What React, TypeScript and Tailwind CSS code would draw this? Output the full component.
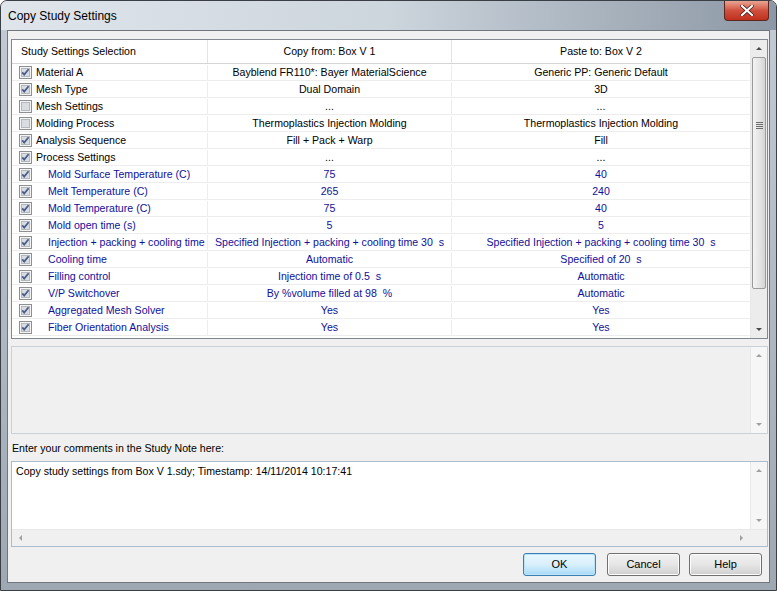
import React from "react";

type Row = {
  label: string;
  from: string;
  to: string;
  checked: boolean;
  child?: boolean;
};

const rows: Row[] = [
  { label: "Material A", from: "Bayblend FR110*: Bayer MaterialScience", to: "Generic PP: Generic Default", checked: true },
  { label: "Mesh Type", from: "Dual Domain", to: "3D", checked: true },
  { label: "Mesh Settings", from: "...", to: "...", checked: false },
  { label: "Molding Process", from: "Thermoplastics Injection Molding", to: "Thermoplastics Injection Molding", checked: false },
  { label: "Analysis Sequence", from: "Fill + Pack + Warp", to: "Fill", checked: true },
  { label: "Process Settings", from: "...", to: "...", checked: true },
  { label: "Mold Surface Temperature (C)", from: "75", to: "40", checked: true, child: true },
  { label: "Melt Temperature (C)", from: "265", to: "240", checked: true, child: true },
  { label: "Mold Temperature (C)", from: "75", to: "40", checked: true, child: true },
  { label: "Mold open time (s)", from: "5", to: "5", checked: true, child: true },
  { label: "Injection + packing + cooling time", from: "Specified Injection + packing + cooling time 30  s", to: "Specified Injection + packing + cooling time 30  s", checked: true, child: true },
  { label: "Cooling time", from: "Automatic", to: "Specified of 20  s", checked: true, child: true },
  { label: "Filling control", from: "Injection time of 0.5  s", to: "Automatic", checked: true, child: true },
  { label: "V/P Switchover", from: "By %volume filled at 98  %", to: "Automatic", checked: true, child: true },
  { label: "Aggregated Mesh Solver", from: "Yes", to: "Yes", checked: true, child: true },
  { label: "Fiber Orientation Analysis", from: "Yes", to: "Yes", checked: true, child: true },
];

function CheckBox({ checked }: { checked: boolean }) {
  return (
    <svg width="13" height="13" viewBox="0 0 13 13" className="shrink-0">
      <rect x="0.5" y="0.5" width="12" height="12" fill="#f4f4f4" stroke="#8e8f8f" />
      <rect x="2.5" y="2.5" width="8" height="8" fill="#d9dde2" stroke="#b3b8bf" />
      {checked && (
        <path d="M3.2 6.3 L5.2 8.6 L9.6 3.2" fill="none" stroke="#4a5e8c" strokeWidth="1.8" />
      )}
    </svg>
  );
}

function Arrow({ dir, color = "#4a4a4a" }: { dir: "up" | "down" | "left" | "right"; color?: string }) {
  const pts =
    dir === "up"
      ? "1,5 4,2 7,5"
      : dir === "down"
      ? "1,2 4,5 7,2"
      : dir === "left"
      ? "5,1 2,4 5,7"
      : "2,1 5,4 2,7";
  return (
    <svg width="8" height="8" viewBox="0 0 8 8">
      <polygon points={pts} fill={color} />
    </svg>
  );
}

function VScroll({ thumb, track = "bg-[#ececec]", arrowColor }: { thumb?: boolean; track?: string; arrowColor?: string }) {
  return (
    <div className={`w-[17px] flex flex-col ${track} border-l border-[#e8e8e8]`}>
      <div className="h-[17px] flex items-center justify-center">
        <Arrow dir="up" color={arrowColor} />
      </div>
      <div className="flex-1 flex flex-col">
        {thumb && (
          <div className="h-[232px] mx-[1px] rounded-[2px] border border-[#9a9a9a] bg-gradient-to-r from-[#f3f3f3] via-[#e6e6e6] to-[#d4d4d4] flex items-center justify-center">
            <div className="flex flex-col gap-[1px] -mt-[96px]">
              <div className="w-[7px] h-[1px] bg-[#6d6d6d]" />
              <div className="w-[7px] h-[1px] bg-[#6d6d6d]" />
              <div className="w-[7px] h-[1px] bg-[#6d6d6d]" />
              <div className="w-[7px] h-[1px] bg-[#6d6d6d]" />
            </div>
          </div>
        )}
      </div>
      <div className="h-[17px] flex items-center justify-center">
        <Arrow dir="down" color={arrowColor} />
      </div>
    </div>
  );
}

function Button({ label, primary }: { label: string; primary?: boolean }) {
  return (
    <div
      className={`w-[73px] h-[23px] rounded-[3px] border flex items-center justify-center text-[11px] text-black ${
        primary
          ? "border-[#3c7fb1] bg-gradient-to-b from-[#eaf6fd] via-[#d9f0fc] to-[#a7d9f5] shadow-[inset_0_0_0_1px_#b8e3fb]"
          : "border-[#707070] bg-gradient-to-b from-[#f2f2f2] via-[#e6e6e6] to-[#cfcfcf] shadow-[inset_0_0_0_1px_#fcfcfc]"
      }`}
    >
      {label}
    </div>
  );
}

export default function App() {
  return (
    <div
      className="w-[777px] h-[591px] flex flex-col border border-[#3a3f45] rounded-t-[7px] bg-gradient-to-b from-[#c3ccd5] to-[#9ea8b3] overflow-hidden"
      style={{ fontFamily: '"Liberation Sans", Arial, sans-serif' }}
    >
      {/* title bar */}
      <div className="h-[29px] flex items-start relative bg-gradient-to-r from-[#dfe5eb] via-[#cdd5dd] to-[#8c98a5]">
        <div className="pl-[7px] pt-[6px] text-[12px] text-black">Copy Study Settings</div>
        <div className="absolute right-[7px] top-0 w-[45px] h-[20px] rounded-b-[4px] border border-t-0 border-[#5e2620] bg-gradient-to-b from-[#e8a493] via-[#d0503d] to-[#c0301c] flex items-center justify-center">
          <svg width="14" height="11" viewBox="0 0 14 11">
            <path d="M2 1 L12 10 M12 1 L2 10" stroke="#3d1510" strokeWidth="3.6" strokeLinecap="square" />
            <path d="M2 1 L12 10 M12 1 L2 10" stroke="#ffffff" strokeWidth="2.2" strokeLinecap="square" />
          </svg>
        </div>
      </div>

      <div className="flex flex-1 px-[6px] pb-[7px]">
        {/* client */}
        <div className="flex-1 bg-[#f0f0f0] border border-[#6f767d] flex flex-col pl-[3px] pr-[1px] text-[10.6px] text-black">
          {/* table */}
          <div className="mt-[8px] h-[300px] border border-[#828790] bg-white flex">
            <div className="flex-1 flex flex-col">
              <div className="h-[24px] flex border-b border-[#d5d5d5] shrink-0">
                <div className="w-[196px] pl-[9px] flex items-center border-r border-[#e3e3e3]">Study Settings Selection</div>
                <div className="w-[244px] flex items-center justify-center border-r border-[#e3e3e3]">Copy from: Box V 1</div>
                <div className="flex-1 flex items-center justify-center">Paste to: Box V 2</div>
              </div>
              {rows.map((r) => (
                <div
                  key={r.label}
                  className={`h-[17px] pt-[1px] flex border-b border-[#ededed] shrink-0 ${r.child ? "text-[#10109c]" : "text-black"}`}
                >
                  <div className="w-[196px] pl-[7px] flex items-center border-r border-[#ededed] whitespace-nowrap overflow-hidden">
                    <CheckBox checked={r.checked} />
                    <span className={r.child ? "ml-[16px]" : "ml-[4px]"}>{r.label}</span>
                  </div>
                  <div className="w-[244px] flex items-center justify-center border-r border-[#ededed] whitespace-pre">{r.from}</div>
                  <div className="flex-1 flex items-center justify-center whitespace-pre">{r.to}</div>
                </div>
              ))}
            </div>
            <VScroll thumb />
          </div>

          {/* empty panel */}
          <div className="mt-[7px] h-[88px] border border-[#c8d0d8] bg-[#f0f0f0] flex">
            <div className="flex-1" />
            <VScroll track="bg-[#f6f6f6]" arrowColor="#a0a0a0" />
          </div>

          <div className="h-[27px] pt-[2px] flex items-center pl-[1px]">Enter your comments in the Study Note here:</div>

          {/* note */}
          <div className="h-[86px] border border-[#abbdcd] bg-white flex flex-col">
            <div className="flex-1 flex">
              <div className="flex-1 pl-[4px] pt-[2px] whitespace-nowrap">Copy study settings from Box V 1.sdy; Timestamp: 14/11/2014 10:17:41</div>
              <VScroll track="bg-[#f6f6f6]" arrowColor="#a0a0a0" />
            </div>
            <div className="h-[17px] flex bg-[#f0f0f0] border-t border-[#e8e8e8]">
              <div className="w-[17px] flex items-center justify-center">
                <Arrow dir="left" color="#a0a0a0" />
              </div>
              <div className="flex-1" />
              <div className="w-[17px] flex items-center justify-center">
                <Arrow dir="right" color="#a0a0a0" />
              </div>
              <div className="w-[17px] bg-[#f0f0f0]" />
            </div>
          </div>

          {/* buttons */}
          <div className="mt-[6px] flex justify-end pr-[6px]">
            <Button label="OK" primary />
            <div className="w-[11px]" />
            <Button label="Cancel" />
            <div className="w-[9px]" />
            <Button label="Help" />
          </div>
        </div>
      </div>
    </div>
  );
}
